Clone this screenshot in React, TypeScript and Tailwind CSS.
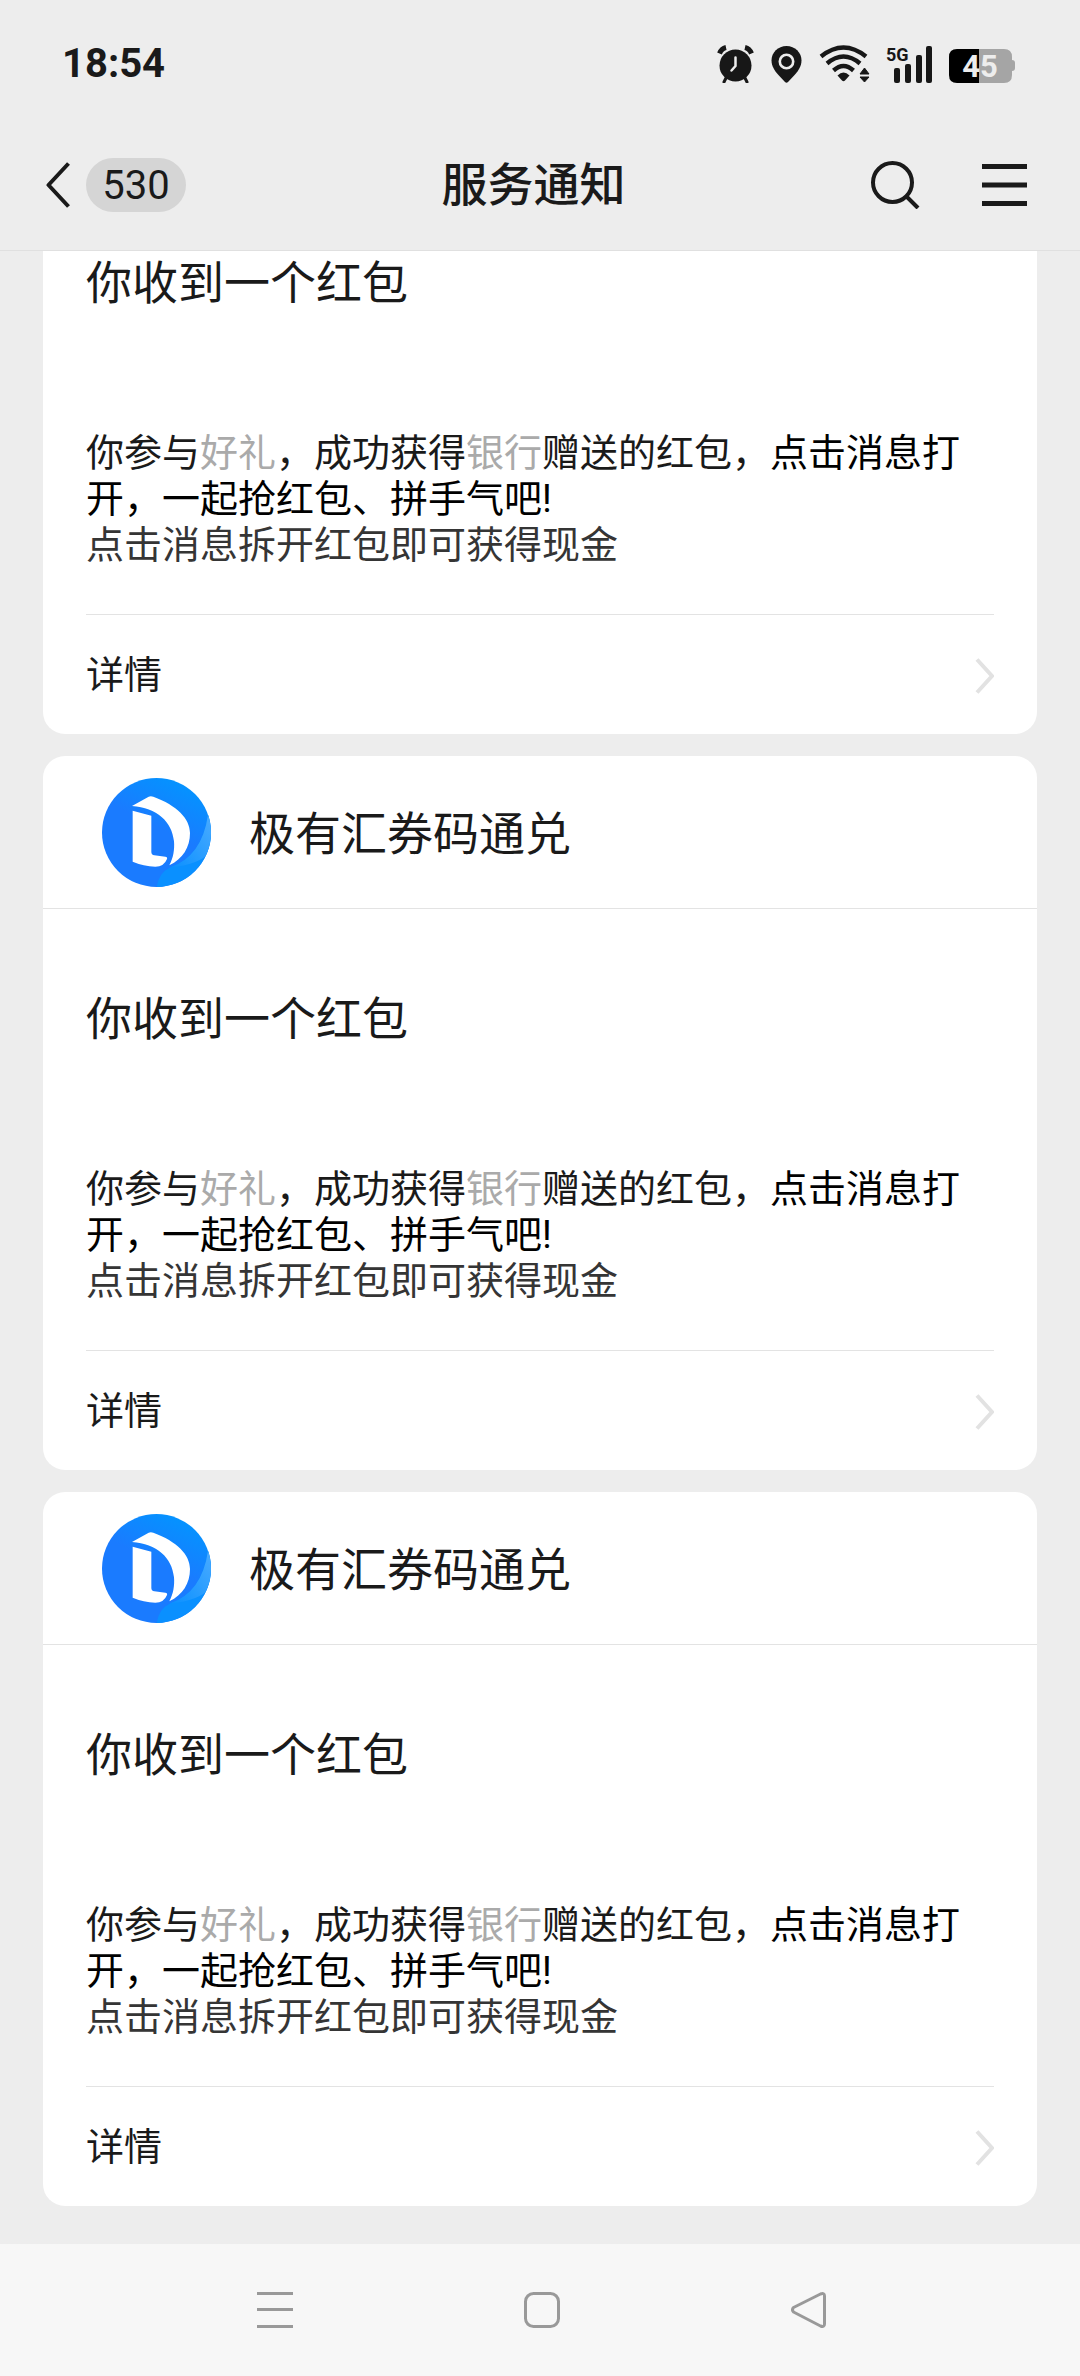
type TMessage = {
    id: number;
    sender?: string;
};

// the first message is already scrolled past its sender row
const messages: TMessage[] = [
    { id: 1 },
    { id: 2, sender: "极有汇券码通兑" },
    { id: 3, sender: "极有汇券码通兑" },
];

function StatusIcons() {
    return (
        <div className="flex items-center gap-4 text-[#171717]">
            <svg width="37" height="38" viewBox="0 0 37 38" fill="none">
                <circle cx="18.5" cy="20.5" r="16" fill="currentColor" />
                <path
                    d="M2.5 8.5Q4.5 3.5 9 2.5M28 2.5Q32.5 3.5 34.5 8.5"
                    stroke="currentColor"
                    strokeWidth="5"
                />
                <path
                    d="M9.5 32L7 37M27.5 32L30 37"
                    stroke="currentColor"
                    strokeWidth="3"
                    strokeLinecap="round"
                />
                <path
                    d="M18.5 12.5V21L14.5 25.5"
                    stroke="#ededed"
                    strokeWidth="2.5"
                    strokeLinecap="round"
                    strokeLinejoin="round"
                />
            </svg>
            <svg width="33" height="38" viewBox="0 0 33 38" fill="none">
                <path
                    d="M16.5 1C8 1 1.5 7.5 1.5 15.5C1.5 21 4.5 25.5 8 29.5L15 37Q16.5 38.5 18 37L25 29.5C28.5 25.5 31.5 21 31.5 15.5C31.5 7.5 25 1 16.5 1Z"
                    fill="currentColor"
                />
                <circle
                    cx="16.5"
                    cy="16.5"
                    r="6.7"
                    stroke="#ededed"
                    strokeWidth="2.6"
                />
            </svg>
            <svg width="51" height="38" viewBox="0 0 51 38" fill="none">
                <path
                    d="M2 11.5Q24.5 -6.5 47 11.5M8 18.5Q24.5 4.500 41 18.5M14.5 25.5Q24.500 16.5 34.5 25.5"
                    stroke="currentColor"
                    strokeWidth="4.4"
                />
                <path
                    d="M18.500 30.5Q24.5 24.5 30.500 30.5L26 35.5Q24.5 37 23 35.5Z"
                    fill="currentColor"
                />
                <path
                    d="M41 29L45.5 23L50 29ZM41 32L45.5 37L50 32Z"
                    fill="currentColor"
                    stroke="currentColor"
                    strokeLinejoin="round"
                />
            </svg>
            <svg
                width="47"
                height="38"
                viewBox="0 0 47 38"
                fill="currentColor"
            >
                <rect x="8" y="23" width="6" height="15" rx="2" />
                <rect x="19" y="19" width="6" height="19" rx="2" />
                <rect x="30" y="10" width="6" height="28" rx="2" />
                <rect x="40" y="1" width="6" height="37" rx="2" />
                <text
                    x="0"
                    y="16"
                    fontSize="18"
                    className="font-['Roboto',sans-serif] font-bold"
                >
                    5G
                </text>
            </svg>
            <svg width="66" height="38" viewBox="0 0 66 38">
                <path
                    d="M30 4H55Q63 4 63 12V15Q66 15 66 18V23Q66 26 63 26V30Q63 38 55 38H30Z"
                    fill="#a5a5a5"
                />
                <path d="M30 4H8Q0 4 0 12V30Q0 38 8 38H30Z" fill="#000" />
                <text
                    x="31"
                    y="32"
                    fontSize="31"
                    textAnchor="middle"
                    fill="#ededed"
                    className="font-['Roboto',sans-serif] font-bold"
                >
                    45
                </text>
            </svg>
        </div>
    );
}

function SenderLogo() {
    return (
        <svg className="size-[109px] shrink-0" viewBox="0 0 327 327">
            <defs>
                <linearGradient id="disc" x1="0.2" y1="0.8" x2="0.6" y2="0">
                    <stop offset="0.5" stopColor="#1a7bff" />
                    <stop offset="1" stopColor="#0592ff" />
                </linearGradient>
                <linearGradient id="shine" x1="0" y1="1" x2="1" y2="0">
                    <stop offset="0" stopColor="#0a90ff" />
                    <stop offset="1" stopColor="#4aabff" />
                </linearGradient>
                <clipPath id="round">
                    <circle cx="163.5" cy="163.5" r="163.5" />
                </clipPath>
            </defs>
            <g clipPath="url(#round)">
                <rect width="327" height="327" fill="url(#disc)" />
                <path
                    d="M164 327Q170 285 205 268Q300 235 318 110L327 110V327Z"
                    fill="#0a90ff"
                />
                <path
                    d="M205 268Q300 235 318 110L327 110V220Q290 262 205 268Z"
                    fill="url(#shine)"
                />
            </g>
            <path
                d="M90 84L140 56Q146 53 154 56C225 82 264 122 264 165C264 208 242 243 202 262C214 240 218 215 216 190C210 130 165 90 90 84Z"
                fill="#fff"
            />
            <path
                d="M92 98L148 113V222Q148 231 157 232L190 236Q197 237 195 243Q186 266 160 266Q125 265 92 251Z"
                fill="#fff"
            />
        </svg>
    );
}

function MessageCard({ message }: { message: TMessage }) {
    return (
        <article
            className={`bg-white ${message.sender ? "rounded-[22px]" : "rounded-b-[22px]"}`}
        >
            {message.sender && (
                <div className="flex items-center gap-[38px] border-b border-[#e3e3e3] h-[153px] pl-[59px]">
                    <SenderLogo />
                    <span className="pt-1 text-[46px] leading-[64px]">
                        {message.sender}
                    </span>
                </div>
            )}
            <div className={`px-[43px] ${message.sender ? "pt-[78px]" : ""}`}>
                <h2 className="text-[46px] leading-[64px]">你收到一个红包</h2>
                <p className="mt-[115px] text-[38px] leading-[46px]">
                    你参与<span className="text-[#aaaaaa]">好礼</span>
                    ，成功获得<span className="text-[#aaaaaa]">银行</span>
                    赠送的红包，
                    <span className="text-black">
                        点击消息打开，一起抢红包、拼手气吧!
                    </span>
                </p>
                <p className="text-[38px] leading-[46px] text-[#353535]">
                    点击消息拆开红包即可获得现金
                </p>
                <a
                    href="#"
                    className="mt-[46px] flex h-[120px] items-center justify-between border-t border-[#e3e3e3] pt-[2px] text-[38px]"
                >
                    详情
                    <svg
                        width="19"
                        height="36"
                        viewBox="0 0 19 36"
                        fill="none"
                        stroke="#e2e2e2"
                        strokeWidth="4"
                    >
                        <path d="M2 1.5L17 18L2 34.5" />
                    </svg>
                </a>
            </div>
        </article>
    );
}

export default function App() {
    return (
        <div className="flex min-h-screen flex-col bg-[#ededed] font-['Roboto','Noto_Sans_CJK_SC',sans-serif] text-[#1a1a1a]">
            <header className="border-b border-[#e0e0e0]">
                <div className="flex h-[128px] items-center justify-between pl-[62px] pr-[65px]">
                    <span className="text-[40px] font-bold">18:54</span>
                    <StatusIcons />
                </div>
                <div className="grid h-[122px] grid-cols-[1fr_auto_1fr] items-start pt-[24px] pl-[40px] pr-[53px]">
                    <button className="flex h-[66px] items-center gap-4 justify-self-start pl-[6px]">
                        <svg
                            width="24"
                            height="46"
                            viewBox="0 0 24 46"
                            fill="none"
                            stroke="currentColor"
                            strokeWidth="4"
                            strokeLinejoin="round"
                        >
                            <path d="M22.5 1.5L2.5 23L22.5 44.5" />
                        </svg>
                        <span className="flex h-[54px] w-[100px] items-center justify-center rounded-full bg-[#d5d5d5] pt-[2px] text-[40px]">
                            530
                        </span>
                    </button>
                    <h1 className="text-[46px] leading-[66px] font-medium">
                        服务通知
                    </h1>
                    <div className="flex h-[66px] items-center gap-[62px] justify-self-end">
                        <button aria-label="搜索">
                            <svg
                                width="49"
                                height="48"
                                viewBox="0 0 49 48"
                                fill="none"
                                stroke="currentColor"
                                strokeWidth="4"
                            >
                                <circle cx="21.5" cy="21.5" r="19.5" />
                                <path d="M35.5 35.5L47 47" />
                            </svg>
                        </button>
                        <button aria-label="菜单">
                            <svg
                                width="45"
                                height="42"
                                viewBox="0 0 45 42"
                                stroke="currentColor"
                                strokeWidth="5"
                            >
                                <path d="M0 2.5H45M0 21H45M0 39.5H45" />
                            </svg>
                        </button>
                    </div>
                </div>
            </header>

            <main className="flex grow flex-col gap-[22px] px-[43px] pb-[38px]">
                {messages.map((message) => (
                    <MessageCard key={message.id} message={message} />
                ))}
            </main>

            <nav className="grid h-[132px] grid-cols-3 place-items-center bg-[#f7f7f7] pl-[142px] pr-[138px] text-[#999999]">
                <button aria-label="最近任务">
                    <svg
                        width="36"
                        height="36"
                        viewBox="0 0 36 36"
                        stroke="currentColor"
                        strokeWidth="3"
                    >
                        <path d="M0 1.5H36M0 17.5H36M0 34.5H36" />
                    </svg>
                </button>
                <button aria-label="主屏幕">
                    <svg
                        width="36"
                        height="36"
                        viewBox="0 0 36 36"
                        fill="none"
                        stroke="currentColor"
                        strokeWidth="3"
                    >
                        <rect x="1.5" y="1.5" width="33" height="33" rx="8" />
                    </svg>
                </button>
                <button aria-label="返回">
                    <svg
                        width="36"
                        height="36"
                        viewBox="0 0 36 36"
                        fill="none"
                        stroke="currentColor"
                        strokeWidth="3"
                        strokeLinejoin="round"
                    >
                        <path d="M2.5 15.5L29.5 2Q33.5 0.5 33.5 4V32Q33.5 35.5 29.5 34L2.5 20Q0.5 18 2.5 15.5Z" />
                    </svg>
                </button>
            </nav>
        </div>
    );
}
